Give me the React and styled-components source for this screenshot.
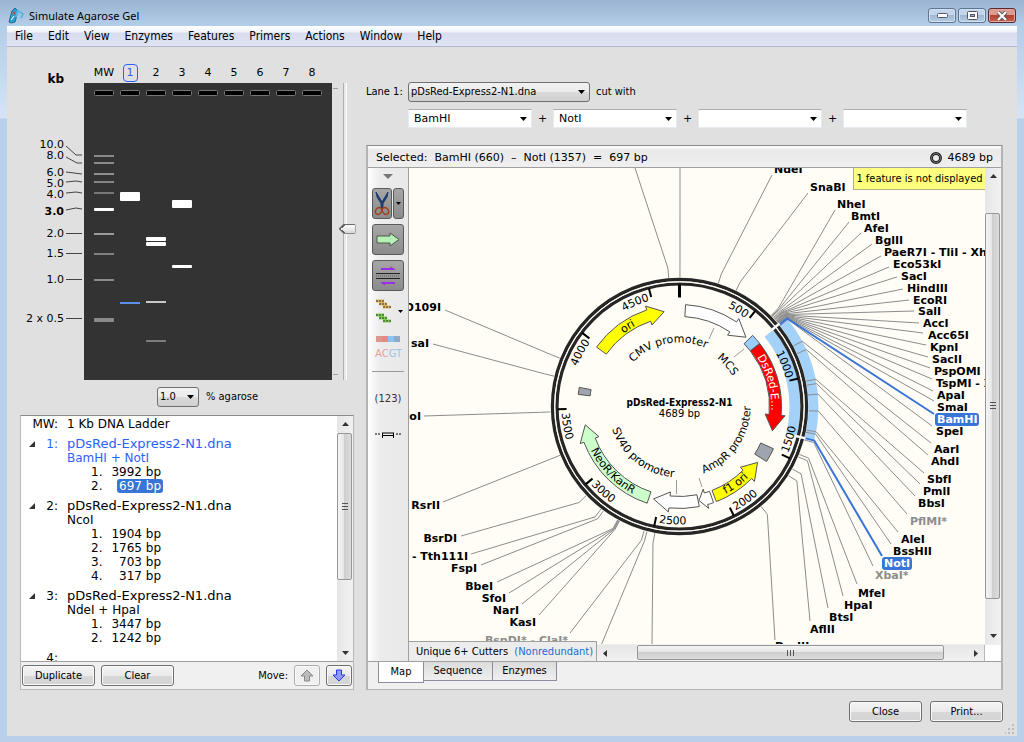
import React from 'react';
import styled, { createGlobalStyle, css } from 'styled-components';

const UI = '"DejaVu Sans Condensed", "Open Sans", sans-serif';
const WIDE = '"DejaVu Sans", sans-serif';

const GlobalStyle = createGlobalStyle`
  * { box-sizing: border-box; }
  body { margin: 0; font-family: ${UI}; font-size: 11px; line-height: 14px; color: #000; }
  button, select, input { font: inherit; color: inherit; margin: 0; }
  ul, ol { list-style: none; margin: 0; padding: 0; }
`;

/* ---------- window frame ---------- */

const Window = styled.div`
  height: 100vh;
  min-height: 600px;
  display: flex;
  flex-direction: column;
  padding: 0 7px 6px;
  overflow: hidden;
  background: linear-gradient(#9ab4d1 0, #b4cde8 26px, #c3d8ee 70px, #d6e4f5 118px, #b9d0ea 119px);
`;

const TitleBar = styled.header`
  height: 26px;
  flex: none;
  display: flex;
  align-items: center;
  gap: 4px;
  padding: 5px 1px 0 1px;
`;

const Title = styled.h1`
  flex: 1;
  margin: 0;
  font: 11px/16px "Noto Sans", "Open Sans", sans-serif;
`;

const WindowControls = styled.div`
  display: flex;
  gap: 2px;
`;

const WindowButton = styled.button`
  width: 28px;
  height: 15px;
  padding: 0;
  display: grid;
  place-items: center;
  border: 1px solid ${(p) => (p.$close ? '#5c2a2e' : '#5f7690')};
  border-radius: 3px;
  box-shadow: inset 0 0 0 1px ${(p) => (p.$close ? '#e2a79e' : '#d3e2f2')};
  background: ${(p) =>
    p.$close
      ? 'linear-gradient(#dd9a90 0 45%, #b5402d 50%, #c86150)'
      : 'linear-gradient(#c2d5ea 0 45%, #9fb7d2 50%, #b7cde5)'};
`;

const MenuBar = styled.nav`
  height: 21px;
  flex: none;
  display: flex;
  align-items: center;
  gap: 15px;
  padding-left: 8px;
  border-bottom: 1px solid #b3b8cf;
  background: linear-gradient(#fff, #f0f3fa 6px, #d6dcee 7px, #e0e5f5);
`;

const MenuItem = styled.button`
  border: 0;
  padding: 0;
  background: none;
  font-size: 12px;
`;

const Client = styled.main`
  flex: 1;
  min-height: 0;
  display: flex;
  flex-direction: column;
  background: #e0e0e0;
`;

const Columns = styled.div`
  flex: 1;
  min-height: 0;
  display: flex;
  gap: 8px;
  padding: 0 14px 0 13px;
`;

const Footer = styled.footer`
  position: relative;
  flex: none;
  display: flex;
  justify-content: flex-end;
  gap: 8px;
  padding: 11px 14px 14px;
`;

const Grip = styled.svg`
  position: absolute;
  right: 2px;
  bottom: 2px;
`;

const PushButton = styled.button`
  width: ${(p) => (p.$square ? '26px' : '73px')};
  height: 21px;
  padding: 0;
  display: grid;
  place-items: center;
  border: 1px solid #707070;
  border-radius: 3px;
  background: linear-gradient(#f4f4f4, #eaeaea 50%, #d8d8d8 52%, #d4d4d4);
  box-shadow: inset 0 0 0 1px #fafafa;
  &:disabled { border-color: #adadad; background: #f0f0f0; }
`;

/* ---------- gel column ---------- */

const GelColumn = styled.section`
  flex: none;
  width: 338px;
  padding-top: 15px;
  display: flex;
  flex-direction: column;
`;

const GelRow = styled.div`
  display: flex;
  align-items: flex-end;
`;

const GelBox = styled.div`
  width: 248px;
`;

const LaneHeads = styled.div`
  display: flex;
  height: 21px;
  padding: 2px 7px 0;
  font-family: ${WIDE};
`;

const LaneHead = styled.button`
  width: 26px;
  height: 18px;
  display: grid;
  place-items: center;
  border: 0;
  padding: 0;
  background: none;
  span {
    padding: 0 3px;
    line-height: 16px;
    border-radius: 4px;
    border: 1px solid ${(p) => (p.$active ? '#2962ff' : 'transparent')};
    color: ${(p) => (p.$active ? '#2962ff' : '#000')};
    margin: ${(p) => (p.$wide ? '0 -4px' : '0')};
  }
`;

const GelImage = styled.svg`
  display: block;
  background: #333;
`;

const SliderBox = styled.div`
  display: flex;
  height: 297px;
`;

const Slider = styled.input`
  appearance: none;
  writing-mode: vertical-lr;
  width: 18px;
  height: 297px;
  background: linear-gradient(90deg, transparent 5px, #b0b0b0 5px 6px, #e8e8e8 6px 8px, #fff 8px 9px, transparent 9px);
  &::-webkit-slider-thumb {
    appearance: none;
    width: 17px;
    height: 10px;
    background:
      linear-gradient(150deg, #666 4px, transparent 4px) 0 0 / 6px 5px no-repeat,
      linear-gradient(30deg, #666 4px, transparent 4px) 0 100% / 6px 5px no-repeat,
      linear-gradient(#fff, #d8d8d8);
    border: 1px solid #6a6a6a;
    border-left: 0;
    border-radius: 0 2px 2px 0;
    clip-path: polygon(0 50%, 5px 0, 100% 0, 100% 100%, 5px 100%);
  }
`;

const AgaroseRow = styled.label`
  display: flex;
  align-items: center;
  gap: 7px;
  padding: 7px 0 8px 137px;
`;

/* ---------- drop-downs ---------- */

const DropBox = styled.span`
  display: grid;
  width: ${(p) => p.$w}px;
  align-items: center;
  select {
    grid-area: 1 / 1;
    appearance: none;
    width: 100%;
    outline: 0;
    ${(p) =>
      p.$flat
        ? css`
            height: 19px;
            padding: 0 16px 0 5px;
            font-family: ${WIDE};
            border: 1px solid #e6ebf2;
            border-top-color: #abadb3;
            background: #fff;
          `
        : css`
            height: 20px;
            padding: 0 16px 0 2px;
            border: 1px solid #707070;
            border-radius: 3px;
            background: linear-gradient(#f2f2f2, #ebebeb 50%, #dadada 52%, #cfcfcf);
          `}
  }
  svg {
    grid-area: 1 / 1;
    justify-self: end;
    margin-right: 5px;
    pointer-events: none;
  }
`;

function Drop({ w, flat, value, label }) {
  return (
    <DropBox $w={w} $flat={flat}>
      <select aria-label={label} defaultValue={value}>
        <option value={value}>{value}</option>
      </select>
      <svg width="7" height="4"><path d="M0 0h7L3.500 4z" /></svg>
    </DropBox>
  );
}

/* ---------- fragment list ---------- */

const ListPanel = styled.div`
  width: 334px;
  flex: 1;
  min-height: 0;
  display: flex;
  flex-direction: column;
  border: 1px solid #b8b8b8;
  border-top-color: #8a8a8a;
  background: #f0f0f0;
`;

const ListBody = styled.div`
  flex: 1;
  min-height: 0;
  display: flex;
  background: #fff;
`;

const LaneList = styled.ul`
  flex: 1;
  overflow: hidden;
  padding-top: 1px;
  font-family: ${WIDE};
  font-size: 12px;
  line-height: 14px;
`;

const LaneItem = styled.li`
  display: grid;
  grid-template-columns: 37px 1fr;
  column-gap: 9px;
  margin-bottom: 6px;
`;

const LaneTag = styled.span`
  display: flex;
  align-items: center;
  justify-content: flex-end;
  gap: 11px;
  height: 14px;
  color: ${(p) => (p.$active ? '#2962ff' : '#000')};
`;

const LaneName = styled.div`
  height: 14px;
  font-size: ${(p) => (p.$name ? '13px' : '12px')};
  color: ${(p) => (p.$active ? '#2962ff' : '#000')};
`;

const Fragments = styled.ol`
  padding-left: 24px;
`;

const Fragment = styled.li`
  display: grid;
  grid-template-columns: 14px 56px;
  height: 14px;
  span { justify-self: end; white-space: nowrap; }
  mark {
    justify-self: end;
    margin-right: -2px;
    padding: 0 2px;
    border-radius: 3px;
    color: #fff;
    background: #3875d7;
  }
`;

const ListTools = styled.div`
  height: 28px;
  flex: none;
  display: flex;
  align-items: center;
  gap: 6px;
  padding: 0 1px;
  border-top: 1px solid #a0a0a0;
`;

const MoveLabel = styled.span`
  margin-left: auto;
`;

/* ---------- scroll bars ---------- */

const Bar = styled.div`
  display: flex;
  flex-direction: ${(p) => (p.$h ? 'row' : 'column')};
  ${(p) => (p.$h ? 'flex: 1; height: 16px;' : 'width: 16px; flex: none;')}
  background: linear-gradient(${(p) => (p.$h ? '180deg' : '90deg')}, #e6e6e6, #f2f2f2);
`;

const BarArrow = styled.button`
  width: 16px;
  height: 16px;
  flex: none;
  padding: 0;
  border: 0;
  display: grid;
  place-items: center;
  background: none;
`;

const BarThumb = styled.div`
  ${(p) => (p.$h ? 'height: 15px;' : 'width: 15px;')}
  flex: ${(p) => p.$size} 1 0;
  display: grid;
  place-items: center;
  border: 1px solid #979797;
  border-radius: 2px;
  background: linear-gradient(${(p) => (p.$h ? '180deg' : '90deg')}, #f5f5f5, #e6e6e6 45%, #cfcfcf 50%, #dcdcdc);
`;

const BarSpace = styled.div`
  flex: ${(p) => p.$size} 1 0;
`;

function ScrollBar({ horizontal, before, size, after }) {
  const arrows = horizontal ? ['M5 0v7L1 3.500z', 'M1 0v7L5 3.500z'] : ['M0 5h7L3.500 1z', 'M0 1h7L3.500 5z'];
  return (
    <Bar $h={horizontal}>
      <BarArrow aria-label="Scroll back"><svg width="7" height="7"><path d={arrows[0]} fill="#333" /></svg></BarArrow>
      <BarSpace $size={before} />
      <BarThumb $h={horizontal} $size={size}>
        <svg width="8" height="8">
          <path d={horizontal ? 'M.5 1v6M3.500 1v6M6.500 1v6' : 'M1 .5h6M1 3.500h6M1 6.500h6'} stroke="#555" />
        </svg>
      </BarThumb>
      <BarSpace $size={after} />
      <BarArrow aria-label="Scroll on"><svg width="7" height="7"><path d={arrows[1]} fill="#333" /></svg></BarArrow>
    </Bar>
  );
}

/* ---------- map column ---------- */

const MapColumn = styled.section`
  flex: 1;
  min-width: 0;
  display: flex;
  flex-direction: column;
  padding-top: 35px;
`;

const LaneForm = styled.form`
  display: grid;
  grid-template-columns: 42px 1fr;
  row-gap: 7px;
  align-items: center;
  padding-bottom: 17px;
`;

const FormLine = styled.div`
  grid-column: 2;
  display: flex;
  align-items: center;
  gap: 6px;
`;

const Plus = styled.span`
  width: 9px;
  text-align: center;
  font-family: ${WIDE};
`;

const MapPanel = styled.div`
  flex: 1;
  min-height: 0;
  display: flex;
  flex-direction: column;
  border: 2px solid #b4b4b4;
  border-top: 1px solid #8a8a8a;
  border-bottom-width: 1px;
  background: #f0f0f0;
`;

const MapHeader = styled.div`
  height: 22px;
  flex: none;
  display: flex;
  align-items: center;
  padding: 2px 8px 0;
  border-bottom: 1px solid #a0a0a0;
  background: linear-gradient(#fff, #e9e9e9 4px, #f0f0f0);
  font-family: ${WIDE};
  white-space: pre;
  svg { margin: 0 6px 0 auto; }
`;

const MapBody = styled.div`
  flex: 1;
  min-height: 0;
  display: flex;
`;

const ToolStrip = styled.div`
  width: 41px;
  flex: none;
  display: flex;
  flex-direction: column;
  align-items: center;
  padding-top: 6px;
  border-right: 1px solid #a0a0a0;
  background: linear-gradient(90deg, #fff, #ececec 30%, #e8e8e8);
  & > svg { flex: none; }
`;

const ToolRow = styled.div`
  display: flex;
  gap: 1px;
  margin-top: ${(p) => p.$gap || 5}px;
`;

const Tool = styled.button`
  width: ${(p) => p.$w || 32}px;
  height: 31px;
  padding: 0;
  display: grid;
  place-items: center;
  border: 1px solid ${(p) => (p.$on ? '#5a5a5a' : 'transparent')};
  border-radius: 3px;
  background: ${(p) => (p.$on ? 'linear-gradient(#a6a6a6, #8b8b8b)' : 'none')};
  color: #333;
  font-family: ${WIDE};
  font-size: 10px;
  line-height: 12px;
`;

const Rule = styled.div`
  width: 32px;
  height: 1px;
  margin: 8px 0 6px;
  background: #9a9a9a;
`;

const MapMain = styled.div`
  flex: 1;
  min-width: 0;
  display: flex;
  flex-direction: column;
`;

const MapView = styled.div`
  flex: 1;
  min-height: 0;
  display: flex;
`;

const Canvas = styled.div`
  position: relative;
  flex: 1;
  min-width: 0;
  overflow: hidden;
  background: #fffdf5;
  svg { display: block; width: 100%; height: 100%; }
`;

const Notice = styled.div`
  position: absolute;
  top: 0;
  right: 0;
  width: 132px;
  height: 22px;
  line-height: 21px;
  text-align: center;
  border: 1px solid #b0b080;
  border-width: 0 0 1px 1px;
  background: #ffff80;
  font-size: 11px;
`;

const MapStatus = styled.div`
  flex: none;
  height: 17px;
  display: flex;
  align-items: flex-end;
  background: #f0f0f0;
`;

const CutterSet = styled.div`
  position: relative;
  height: 20px;
  flex: none;
  width: 188px;
  padding: 0 0 0 7px;
  line-height: 20px;
  white-space: pre;
  border: 1px solid #a0a0a0;
  border-width: 1px 1px 0 0;
  background: #ececec;
  a { color: #1b6ad0; text-decoration: none; }
`;

const Corner = styled.div`
  width: 17px;
  height: 16px;
  border-left: 1px solid #b8b8b8;
  background: #fff;
`;

const Tabs = styled.div`
  flex: none;
  height: 28px;
  display: flex;
  align-items: flex-start;
  padding-left: 10px;
  border-top: 1px solid #a0a0a0;
`;

const Tab = styled.button`
  width: ${(p) => p.$w}px;
  height: ${(p) => (p.$on ? '21px' : '19px')};
  padding: 0;
  border: 1px solid #8c8ca0;
  border-top: 0;
  border-left-width: ${(p) => (p.$on ? '1px' : '0')};
  background: ${(p) => (p.$on ? '#fff' : 'linear-gradient(#dcdcdc, #efefef)')};
`;

/* ---------- gel data ---------- */

const SCALE = [
  ['10.0', 144, '66,146 76,155 82,155'],
  ['8.0', 155, '66,157 77,163 82,163'],
  ['6.0', 172, '66,172 82,174'],
  ['5.0', 183, '66,182 76,181 82,182'],
  ['4.0', 194, '66,193 76,192 82,193'],
  ['3.0', 211, '66,210 76,208 82,209'],
  ['2.0', 233, '66,233.5 82,233.5'],
  ['1.5', 253, '66,253.5 82,253.5'],
  ['1.0', 279, '66,279.5 82,279.5'],
  ['2 x 0.5', 318, '66,318.5 82,318.5'],
];

const BANDS = [
  [0, 72, 2, '#8a8a8a'], [0, 79, 2, '#8a8a8a'], [0, 90, 2, '#8f8f8f'], [0, 98, 2, '#858585'],
  [0, 109, 2, '#777'], [0, 125, 3, '#fff'], [0, 150, 2, '#9a9a9a'], [0, 170, 2, '#808080'],
  [0, 196, 2, '#8a8a8a'], [0, 235, 4, '#8a8a8a'],
  [1, 109, 9, '#fff'], [1, 219, 2, '#5b8fe8'],
  [2, 154, 4, '#fff'], [2, 159, 4, '#fff'], [2, 218, 2, '#c8c8c8'], [2, 257, 2, '#7c7c7c'],
  [3, 117, 8, '#fff'], [3, 182, 3, '#fff'],
];

const LANES = [
  { n: 1, active: true, cut: 'BamHI + NotI', bands: ['3992 bp', '697 bp'] },
  { n: 2, cut: 'NcoI', bands: ['1904 bp', '1765 bp', '703 bp', '317 bp'] },
  { n: 3, cut: 'NdeI + HpaI', bands: ['3447 bp', '1242 bp'] },
];

/* ---------- plasmid map ---------- */

const CX = 270.5;
const CY = 238.5;

const at = (deg, r) => {
  const a = (deg * Math.PI) / 180;
  return [CX + r * Math.sin(a), CY - r * Math.cos(a)];
};
const pt = (deg, r) => at(deg, r).map((v) => v.toFixed(2)).join(' ');

const block = (a, b, r1, r2) =>
  `M${pt(a, r2)}A${r2} ${r2} 0 0 1 ${pt(b, r2)}L${pt(b, r1)}A${r1} ${r1} 0 0 0 ${pt(a, r1)}Z`;

function arrow(tail, neck, tip) {
  const s = tip > tail ? 1 : 0;
  return `M${pt(tail, 102)}A102 102 0 0 ${s} ${pt(neck, 102)}L${pt(neck, 106)}L${pt(tip, 96)}L${pt(neck, 86)}L${pt(neck, 90)}A90 90 0 0 ${1 - s} ${pt(tail, 90)}Z`;
}

function ArcText({ id, text, mid, r, ccw, fill = '#000' }) {
  const [a, b] = ccw ? [mid + 80, mid - 80] : [mid - 80, mid + 80];
  return (
    <>
      <path id={id} d={`M${pt(a, r)}A${r} ${r} 0 0 ${ccw ? 0 : 1} ${pt(b, r)}`} fill="none" />
      <text fontSize="11" fill={fill} textAnchor="middle">
        <textPath href={`#${id}`} startOffset="50%">{text}</textPath>
      </text>
    </>
  );
}

/* name, label x, label mid y, line end x, line end y, ring angle, kind */
const RIGHT_SITES = [
  ['NdeI', 365, 1, 363, 7, 17.5],
  ['SnaBI', 401, 19, 399, 25, 26],
  ['NheI', 428, 36, 426, 42, 45.2],
  ['BmtI', 442, 48, 440, 54, 45.6],
  ['AfeI', 455, 60, 452, 65, 46],
  ['BglII', 466, 72, 463, 76, 46.6],
  ['PaeR7I - TliI - XhoI', 475, 84, 472, 88, 47],
  ['Eco53kI', 484, 96, 480, 99, 47.4],
  ['SacI', 492, 108, 488, 109, 47.6],
  ['HindIII', 498, 120, 494, 121, 47.9],
  ['EcoRI', 504, 132, 500, 132, 48.3],
  ['SalI', 509, 143, 505, 143, 48.6],
  ['AccI', 514, 155, 510, 155, 48.8],
  ['Acc65I', 519, 167, 514, 165, 49.1],
  ['KpnI', 521, 179, 517, 177, 49.3],
  ['SacII', 523, 191, 519, 189, 49.5],
  ['PspOMI', 525, 203, 521, 200, 49.7],
  ['TspMI - XmaI', 527, 215, 523, 211, 49.9],
  ['ApaI', 528, 227, 524, 223, 50.1],
  ['SmaI', 528, 239, 525, 233, 50.4],
  ['SpeI', 527, 263, 523, 258, 51.2],
  ['AarI', 525, 281, 522, 275, 62],
  ['AhdI', 522, 293, 519, 287, 65.8],
  ['SbfI', 518, 311, 515, 305, 78.7],
  ['PmlI', 514, 323, 511, 316, 80.5],
  ['BbsI', 509, 335, 506, 328, 84.9],
  ['PflMI*', 501, 353, 498, 346, 91.9, 'dim'],
  ['AleI', 492, 371, 489, 364, 100.5],
  ['BssHII', 484, 383, 482, 376, 101.5],
  ['XbaI*', 466, 407, 464, 398, 105, 'dim'],
  ['MfeI', 449, 425, 448, 416, 111.8],
  ['HpaI', 435, 437, 434, 428, 113],
  ['BtsI', 420, 449, 419, 440, 119],
  ['AflII', 401, 461, 401, 453, 122.4],
  ['DraIII', 366, 478, 366, 472, 140.8],
  ['BamHI', 528, 251, 525, 246, 50.7, 'hit'],
  ['NotI', 475, 395, 473, 388, 104.2, 'hit'],
];

const LEFT_SITES = [
  ['O109I', 32, 139, 36, 142, 292],
  ['saI', 20, 175, 24, 176, 283.6],
  ['oI', 12, 248, 15, 248, 267.6],
  ['RsrII', 31, 337, 34, 334, 247.8],
  ['BsrDI', 48, 370, 52, 368, 226.3],
  ['- Tth111I', 59, 388, 62, 386, 217.4],
  ['FspI', 68, 400, 72, 397, 216.1],
  ['BbeI', 84, 418, 88, 414, 208.6],
  ['SfoI', 97, 430, 100, 425, 208.3],
  ['NarI', 110, 442, 113, 436, 208],
  ['KasI', 127, 454, 130, 447, 207.7],
  ['BspDI* - ClaI*', 159, 472, 161, 465, 195.9, 'dim'],
  ['', 0, 0, 191, 480, 194.6],
  ['', 0, 0, 243, 480, 191],
  ['', 0, 0, 226, 0, 355.2],
  ['', 0, 0, 271, 0, 0.2],
];

const LINE = { hit: '#3875d7', dim: '#8c8c8c' };

function Site({ site, left }) {
  const [name, x, y, ex, ey, angle, kind] = site;
  return (
    <g>
      <path
        d={`M${pt(angle, 129)}L${pt(angle, 139)}L${ex} ${ey}`}
        fill="none"
        stroke={LINE[kind] || '#8c8c8c'}
        strokeWidth={kind === 'hit' ? 2 : 1}
      />
      {kind === 'hit' && <rect x={x - 2} y={y - 6} width={name === 'NotI' ? 30 : 44} height="13" rx="3" fill="#3875d7" />}
      {name && (
        <text
          x={x}
          y={y + 4}
          textAnchor={left ? 'end' : 'start'}
          fontSize="11"
          fontWeight="bold"
          fill={kind === 'hit' ? '#fff' : kind === 'dim' ? '#8c8c8c' : '#000'}
        >
          {name}
        </text>
      )}
    </g>
  );
}

const STEP = (500 / 4689) * 360;

function PlasmidMap() {
  return (
    <svg fontFamily="DejaVu Sans, sans-serif" role="img" aria-label="Plasmid map">
      <path d={block(50.7, 104.2, 110, 139)} fill="#a3d1f7" />
      {LEFT_SITES.map((s, i) => <Site key={i} site={s} left />)}
      {RIGHT_SITES.map((s) => <Site key={s[0]} site={s} />)}
      <circle cx={CX} cy={CY} r="125" fill="none" stroke="#fffdf5" strokeWidth="8" />
      <circle cx={CX} cy={CY} r="127" fill="none" stroke="#262626" strokeWidth="3.400" />
      <circle cx={CX} cy={CY} r="122.500" fill="none" stroke="#262626" strokeWidth="3.200" />
      <circle cx={CX} cy={CY} r="124.900" fill="none" stroke="#fffdf5" strokeWidth="1" />
      {[50.3, 104.2].map((a) => (
        <path key={a} d={`M${pt(a, 119)}L${pt(a, 130)}`} stroke="#fff" strokeWidth="2.500" />
      ))}
      <path d={`M${pt(0, 109)}L${pt(0, 122)}`} stroke="#000" strokeWidth="3" />
      {[1, 2, 3, 4, 5, 6, 7, 8, 9].map((k) => {
        const a = k * STEP;
        const ccw = a > 90 && a < 270;
        return (
          <g key={k}>
            <path d={`M${pt(a, 113)}L${pt(a, 122)}`} stroke="#000" strokeWidth="2" />
            <ArcText id={`tick${k}`} text={String(k * 500)} mid={a - (k === 1 ? 7 : 8.6)} r={ccw ? 118 : 110} ccw={ccw} />
          </g>
        );
      })}
      <g stroke="#555" strokeWidth="1">
        <path d={arrow(3.4, 34, 43.8)} fill="#fff" />
        <path d={arrow(-54.4, -18.7, -9.2)} fill="#ff0" />
        <path d={block(45.8, 51.8, 90, 102)} fill="#99ccff" />
        <path d={arrow(52, 95, 104.6)} fill="#f00" />
        <path d={block(114.2, 122.3, 89, 103)} fill="#9fa5ae" />
        <path d={arrow(158.8, 135, 125.6)} fill="#ff0" />
        <path d={arrow(160.5, 164, 168.3)} fill="#fff" />
        <path d={arrow(168.8, 186, 195.7)} fill="#fff" />
        <path d={arrow(198.5, 249.5, 259)} fill="#ccffcc" />
        <path d={block(276.8, 280.8, 90, 102)} fill="#9fa5ae" />
      </g>
      <path d="M305 160L300 171M335 181L325 189M290 310L293 319M267.500 312V326" stroke="#999" />
      <ArcText id="cmv" text="CMV promoter" mid={-11} r={64} />
      <ArcText id="mcs" text="MCS" mid={49} r={61} />
      <ArcText id="ampr" text="AmpR promoter" mid={125} r={71} ccw />
      <ArcText id="sv40" text="SV40 promoter" mid={218} r={71} ccw />
      <ArcText id="ori" text="ori" mid={-33} r={92} />
      <ArcText id="dsred" text="DsRed-E..." mid={75} r={92} fill="#fff" />
      <ArcText id="f1ori" text="f1 ori" mid={144} r={99} ccw />
      <ArcText id="neor" text="NeoR/KanR" mid={226} r={99} ccw />
      <text x={CX} y="238" textAnchor="middle" fontFamily="DejaVu Sans Condensed, sans-serif" fontSize="10" fontWeight="bold">
        pDsRed-Express2-N1
      </text>
      <text x={CX} y="249" textAnchor="middle" fontSize="10">4689 bp</text>
    </svg>
  );
}

/* ---------- parts ---------- */

function AppIcon() {
  return (
    <svg width="17" height="17" viewBox="0 0 17 17">
      <path d="M1 15L4 4l3-3 3 3-3 11-4 1z" fill="#2f9fd0" stroke="#186a96" />
      <path d="M9 3l6 4-2 4M10 4l-2 6" fill="none" stroke="#56b8e6" strokeWidth="2" />
      <circle cx="6" cy="6" r="1.500" fill="#c2504b" />
      <path d="M3 13l3-4" stroke="#fff" />
    </svg>
  );
}

function GelPanel() {
  return (
    <GelRow>
      <svg width="64" height="318" fontFamily="DejaVu Sans, sans-serif" fontSize="11">
        <g transform="translate(-20 -62)">
          <text x="64" y="83" fontSize="12" fontWeight="bold" textAnchor="end">kb</text>
          {SCALE.map(([t, y, line]) => (
            <g key={t}>
              <text x="64" y={y + 4} textAnchor="end" fontWeight={t === '3.0' ? 'bold' : 'normal'}>{t}</text>
              <polyline points={line} fill="none" stroke="#444" />
            </g>
          ))}
        </g>
      </svg>
      <GelBox>
        <LaneHeads>
          {['MW', '1', '2', '3', '4', '5', '6', '7', '8'].map((t) => (
            <LaneHead key={t} $active={t === '1'} $wide={t === 'MW'}><span>{t}</span></LaneHead>
          ))}
        </LaneHeads>
        <GelImage width="248" height="297">
          {Array.from({ length: 9 }, (_, i) => (
            <rect key={i} x={10.5 + i * 26} y="7.500" width="19" height="5" rx="1" fill="#000" stroke="#777" />
          ))}
          {BANDS.map(([lane, y, h, c]) => (
            <rect key={`${lane}-${y}`} x={10 + lane * 26} y={y} width="20" height={h} rx={h > 2 ? 1 : 0} fill={c} />
          ))}
        </GelImage>
      </GelBox>
      <SliderBox>
        <svg width="6" height="297"><path d="M1 5.500h5M1 291.500h5" stroke="#a0a0a0" /></svg>
        <Slider type="range" aria-label="Run time" min="0" max="100" defaultValue="49" />
      </SliderBox>
    </GelRow>
  );
}

const Caret = () => (
  <svg width="6" height="6"><path d="M6 0v6H0z" fill="#333" /></svg>
);

function FragmentPanel() {
  return (
    <ListPanel>
      <ListBody>
        <LaneList>
          <LaneItem>
            <LaneTag>MW:</LaneTag>
            <LaneName>1 Kb DNA Ladder</LaneName>
          </LaneItem>
          {LANES.map(({ n, active, cut, bands }) => (
            <LaneItem key={n}>
              <LaneTag $active={active}><Caret />{n}:</LaneTag>
              <div>
                <LaneName $name $active={active}>pDsRed-Express2-N1.dna</LaneName>
                <LaneName $active={active}>{cut}</LaneName>
                <Fragments>
                  {bands.map((b, i) => (
                    <Fragment key={b}>
                      {i + 1}.
                      {b === '697 bp' ? <mark>{b}</mark> : <span>{b}</span>}
                    </Fragment>
                  ))}
                </Fragments>
              </div>
            </LaneItem>
          ))}
          <LaneItem><LaneTag>4:</LaneTag></LaneItem>
        </LaneList>
        <ScrollBar before={1} size={146} after={65} />
      </ListBody>
      <ListTools>
        <PushButton>Duplicate</PushButton>
        <PushButton>Clear</PushButton>
        <MoveLabel>Move:</MoveLabel>
        <PushButton $square disabled aria-label="Move up">
          <svg width="14" height="13"><path d="M7 1l6 6H9.500v5h-5V7H1z" fill="#bbb" stroke="#888" /></svg>
        </PushButton>
        <PushButton $square aria-label="Move down">
          <svg width="14" height="13"><path d="M7 12l6-6H9.500V1h-5v5H1z" fill="#8f9cff" stroke="#2a35ee" /></svg>
        </PushButton>
      </ListTools>
    </ListPanel>
  );
}

function Tools() {
  return (
    <ToolStrip>
      <svg width="10" height="5"><path d="M0 0h10L5 5z" fill="#777" /></svg>
      <ToolRow $gap={9}>
        <Tool $on $w={20} aria-label="Show enzymes">
          <svg width="16" height="25" fill="none">
            <path d="M2 1l1 5 5 8 5-8 1-5-6 10z" fill="#1f3c70" stroke="#1f3c70" />
            <path d="M7 13l2 4M9 13l-2 4" stroke="#1f3c70" strokeWidth="2" />
            <ellipse cx="4.500" cy="20" rx="2.800" ry="3.600" transform="rotate(35 4.500 20)" stroke="#a33f18" strokeWidth="1.400" />
            <ellipse cx="11.500" cy="20" rx="2.800" ry="3.600" transform="rotate(-35 11.500 20)" stroke="#a33f18" strokeWidth="1.400" />
          </svg>
        </Tool>
        <Tool $on $w={11} aria-label="Enzyme options"><svg width="5" height="3"><path d="M0 0h5L2.500 3z" /></svg></Tool>
      </ToolRow>
      <ToolRow>
        <Tool $on aria-label="Show features">
          <svg width="25" height="15"><path d="M1 4h13V1l9 6.500-9 6.500v-3H1z" fill="#b6f0b6" stroke="#4a5a4a" /></svg>
        </Tool>
      </ToolRow>
      <ToolRow>
        <Tool $on aria-label="Show primers">
          <svg width="24" height="20">
            <path d="M0 7.500h24M0 12.500h24" stroke="#222" />
            <path d="M0 10h24" stroke="#777" strokeDasharray="1 1" strokeWidth="2" />
            <path d="M5 4V2h9V.5L19 3v1zM19 16h-14v1l4 2.500V18h10z" fill="#9a2ee0" />
          </svg>
        </Tool>
      </ToolRow>
      <ToolRow>
        <Tool $w={23} aria-label="Show alignments">
          <svg width="16" height="25" strokeWidth="3">
            <path d="M0 2h8M3 5h8M7 8h8" stroke="#e0b45c" />
            <path d="M0 16h8M3 19h8M7 22h8" stroke="#7bd44e" />
            <path d="M0 2h8M3 5h8M7 8h8M0 16h8M3 19h8M7 22h8" stroke="#333" strokeWidth="1" strokeDasharray="2 1" />
          </svg>
        </Tool>
        <Tool $w={8} aria-label="Alignment options"><svg width="5" height="3"><path d="M0 0h5L2.500 3z" /></svg></Tool>
      </ToolRow>
      <ToolRow>
        <Tool aria-label="Show sequence">
          <svg width="28" height="24" fontSize="10">
            <rect x="2" width="6" height="6" fill="#dd958f" /><rect x="8" width="6" height="6" fill="#e88880" />
            <rect x="14" width="6" height="6" fill="#8cc4f0" /><rect x="20" width="6" height="6" fill="#8fa9c6" />
            <text x="1" y="21" fill="#e8a09a">AC<tspan fill="#9cc4e8">GT</tspan></text>
          </svg>
        </Tool>
      </ToolRow>
      <Rule />
      <ToolRow><Tool>(123)</Tool></ToolRow>
      <ToolRow>
        <Tool aria-label="Show line breaks">
          <svg width="26" height="6"><path d="M0 2h2M3 2h2M7 1h12M7.500 3.500h11M7.500 1v5M18.500 1v5M21 2h2M24 2h2" stroke="#000" fill="none" /></svg>
        </Tool>
      </ToolRow>
    </ToolStrip>
  );
}

export default function App() {
  return (
    <Window>
      <GlobalStyle />
      <TitleBar>
        <AppIcon />
        <Title>Simulate Agarose Gel</Title>
        <WindowControls>
          <WindowButton aria-label="Minimize"><svg width="11" height="5"><rect x=".5" y=".5" width="10" height="4" rx="1" fill="#fff" stroke="#556" /></svg></WindowButton>
          <WindowButton aria-label="Maximize">
            <svg width="11" height="9"><rect x=".5" y=".5" width="10" height="8" rx="1" fill="#fff" stroke="#556" /><rect x="3.500" y="3.500" width="4" height="2" fill="#9db6d3" stroke="#556" /></svg>
          </WindowButton>
          <WindowButton $close aria-label="Close window">
            <svg width="12" height="10"><path d="M2 1l8 8M10 1l-8 8" stroke="#555" strokeWidth="4" /><path d="M2 1l8 8M10 1l-8 8" stroke="#fff" strokeWidth="2.200" /></svg>
          </WindowButton>
        </WindowControls>
      </TitleBar>
      <MenuBar>
        {['File', 'Edit', 'View', 'Enzymes', 'Features', 'Primers', 'Actions', 'Window', 'Help'].map((m) => (
          <MenuItem key={m}>{m}</MenuItem>
        ))}
      </MenuBar>
      <Client>
        <Columns>
          <GelColumn>
            <GelPanel />
            <AgaroseRow>
              <Drop w={42} value="1.0" label="Percent agarose" />
              % agarose
            </AgaroseRow>
            <FragmentPanel />
          </GelColumn>
          <MapColumn>
            <LaneForm>
              <span>Lane 1:</span>
              <FormLine>
                <Drop w={182} value="pDsRed-Express2-N1.dna" label="Lane 1 sequence" />
                cut with
              </FormLine>
              <FormLine>
                <Drop flat w={124} value="BamHI" label="Enzyme 1" />
                <Plus>+</Plus>
                <Drop flat w={124} value="NotI" label="Enzyme 2" />
                <Plus>+</Plus>
                <Drop flat w={124} value="" label="Enzyme 3" />
                <Plus>+</Plus>
                <Drop flat w={124} value="" label="Enzyme 4" />
              </FormLine>
            </LaneForm>
            <MapPanel>
              <MapHeader>
                <span>{'Selected:  BamHI (660)  –  NotI (1357)  =  697 bp'}</span>
                <svg width="12" height="12">
                  <circle cx="6" cy="6" r="4.500" fill="none" stroke="#222" strokeWidth="3" />
                  <circle cx="6" cy="6" r="4.500" fill="none" stroke="#aaa" strokeWidth=".6" />
                </svg>
                <span>4689 bp</span>
              </MapHeader>
              <MapBody>
                <Tools />
                <MapMain>
                  <MapView>
                    <Canvas>
                      <PlasmidMap />
                      <Notice>1 feature is not displayed</Notice>
                    </Canvas>
                    <ScrollBar before={29} size={386} after={29} />
                  </MapView>
                  <MapStatus>
                    <CutterSet>Unique 6+ Cutters  <a href="#nonredundant">(Nonredundant)</a></CutterSet>
                    <ScrollBar horizontal before={24} size={308} after={24} />
                    <Corner />
                  </MapStatus>
                </MapMain>
              </MapBody>
              <Tabs>
                <Tab $on $w={46}>Map</Tab>
                <Tab $w={69}>Sequence</Tab>
                <Tab $w={64}>Enzymes</Tab>
              </Tabs>
            </MapPanel>
          </MapColumn>
        </Columns>
        <Footer>
          <PushButton>Close</PushButton>
          <PushButton>Print...</PushButton>
          <Grip width="10" height="10"><path d="M8 0v2M8 4v2M8 8v2M4 4v2M4 8v2M0 8v2" stroke="#bbb" strokeWidth="2" /></Grip>
        </Footer>
      </Client>
    </Window>
  );
}
